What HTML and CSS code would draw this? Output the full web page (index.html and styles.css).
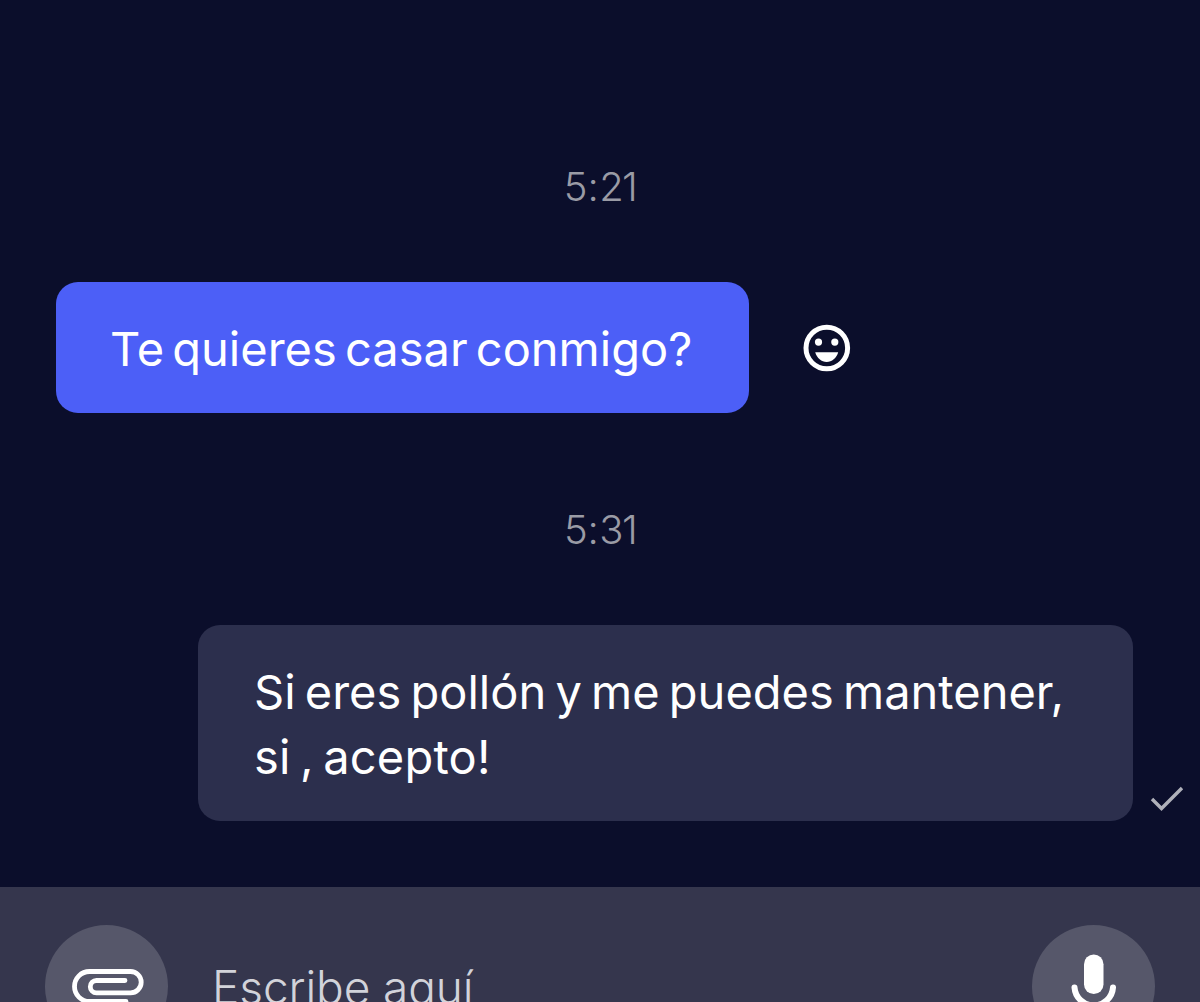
FILE: index.html
```html
<!DOCTYPE html>
<html lang="es">

<head>
    <meta charset="UTF-8">
    <meta name="viewport" content="width=device-width, initial-scale=1.0">
    <title>Chat</title>
    <link rel="stylesheet" href="styles.css">
</head>

<body>
    <main class="chat">
        <time class="time">5<span class="colon">:</span>21</time>
        <div class="message received">
            <div class="bubble"><span class="question">Te quieres casar conmigo?</span></div>
            <svg class="react" viewBox="0 0 48 48" aria-label="Reaccionar">
                <circle cx="23.8" cy="24" r="20.8" fill="none" stroke="#fff" stroke-width="5" />
                <circle cx="15.5" cy="18.1" r="3.6" fill="#fff" />
                <circle cx="31.800" cy="18.1" r="3.6" fill="#fff" />
                <path d="M12.200 28.300h23c-1.800 6-6.300 9.600-11.500 9.600s-9.700-3.600-11.500-9.600z" fill="#fff" />
            </svg>
        </div>

        <time class="time">5<span class="colon">:</span>31</time>
        <div class="message sent">
            <div class="bubble">
                <span class="reply">Si eres pollón y me puedes mantener,</span><br>
                <span class="reply-end">si , acepto!</span>
            </div>
            <svg class="check" viewBox="0 0 34 26" aria-label="Enviado">
                <path d="M2 13l9.500 9.500L32 2" fill="none" stroke="#b0b1ba" stroke-width="3.400" />
            </svg>
        </div>
    </main>

    <footer class="composer">
        <button class="round" aria-label="Adjuntar">
            <svg viewBox="0 0 123 123">
                <path d="M81 76.500H44.500a15 15 0 0 1 0-30H85.500a10.700 10.700 0 0 1 0 21.400H51.500a6.200 6.200 0 0 1 0-12.400H80"
                    fill="none" stroke="#fff" stroke-width="4.800" stroke-linecap="round" />
            </svg>
        </button>
        <div class="placeholder">Escribe aquí</div>
        <button class="round" aria-label="Grabar audio">
            <svg viewBox="0 0 123 123">
                <rect x="52" y="29.500" width="19.500" height="39.500" rx="9.750" fill="#fff" />
                <path d="M42.500 62.500a19.300 19.300 0 0 0 38.500 0M61.750 81v12" fill="none" stroke="#fff"
                    stroke-width="6" stroke-linecap="round" />
            </svg>
        </button>
    </footer>
</body>

</html>
```
FILE: styles.css
```css
* {
    box-sizing: border-box;
}

body {
    display: flex;
    flex-direction: column;
    height: 100vh;
    margin: 0;
    overflow: hidden;
    background-color: #0b0e2b;
    color: #fff;
    font-family: Inter, "Noto Sans", sans-serif;
}

.chat {
    display: flex;
    flex-direction: column;
    flex: none;
    height: 887px;
    padding-top: 157px;
}

.time {
    height: 60px;
    color: #9a9ba5;
    font-size: 40px;
    font-weight: 300;
    line-height: 60px;
    letter-spacing: -1.6px;
    text-align: center;
}

.colon {
    margin: 0 2px 0 1.5px;
}

.message {
    display: flex;
}

.received {
    align-items: center;
    gap: 54px;
    margin: 65px 0 87px 56px;
}

.sent {
    align-items: flex-end;
    justify-content: flex-end;
    gap: 17px;
    margin: 65px 16px 0 0;
}

.bubble {
    padding: 35px 56px 0;
    border-radius: 22px;
    font-size: 47px;
    line-height: 64.5px;
    white-space: nowrap;
}

.received .bubble {
    width: 693px;
    height: 131px;
    padding-left: 54px;
    background-color: #4c5ff7;
}

.sent .bubble {
    width: 935px;
    height: 196px;
    background-color: #2c2f4d;
}

.question {
    word-spacing: -5px;
}

.reply {
    word-spacing: -4px;
}

.reply-end {
    letter-spacing: 0.2px;
    word-spacing: -4px;
}

.react {
    width: 48px;
    height: 48px;
}

.check {
    width: 34px;
    height: 26px;
    margin-bottom: 9px;
}

.composer {
    display: flex;
    flex: 1;
    align-items: flex-start;
    min-height: 0;
    padding: 38px 45px 0;
    overflow: hidden;
    background-color: #35364d;
}

.round {
    flex: none;
    width: 123px;
    height: 123px;
    padding: 0;
    border: none;
    border-radius: 50%;
    background-color: #56576a;
    cursor: pointer;
}

.round svg {
    display: block;
}

.placeholder {
    flex: 1;
    padding-left: 44px;
    color: #d2d3da;
    font-size: 46px;
    font-weight: 300;
    line-height: 125px;
    letter-spacing: -0.1px;
}
```
